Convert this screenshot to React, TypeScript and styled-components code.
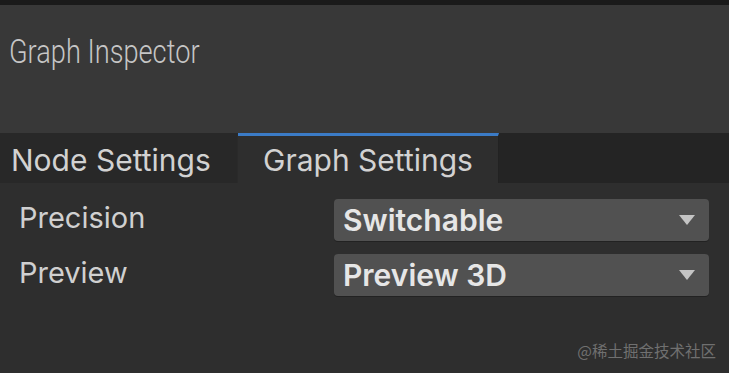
import React from "react";
import styled, { createGlobalStyle } from "styled-components";

const Global = createGlobalStyle`
  html, body {
    margin: 0;
    padding: 0;
    background: #2e2e2e;
  }
  body {
    font-family: Inter, "Noto Sans", sans-serif;
    overflow: hidden;
  }
`;

const Window = styled.div`
  position: relative;
  width: 729px;
  height: 373px;
  display: flex;
  flex-direction: column;
  background: #2e2e2e;
`;

const TopStrip = styled.div`
  height: 5px;
  background: #1a1a1a;
`;

const Header = styled.div`
  height: 128px;
  background: #383838;
  padding: 26px 0 0 9px;
  box-sizing: border-box;
`;

const Title = styled.div`
  font-family: Roboto, Inter, sans-serif;
  font-size: 34px;
  font-weight: 300;
  color: #c6c6c6;
  line-height: 40px;
  transform: scaleX(0.8);
  transform-origin: left center;
  white-space: nowrap;
`;

const TabBar = styled.div`
  height: 50px;
  display: flex;
  background: #242424;
`;

const Tab = styled.div<{ $active?: boolean }>`
  width: ${(p) => (p.$active ? 261 : 238)}px;
  box-sizing: border-box;
  display: flex;
  align-items: center;
  padding-left: ${(p) => (p.$active ? 25 : 11)}px;
  font-size: 30px;
  color: #d2d2d2;
  background: ${(p) => (p.$active ? "#2e2e2e" : "#282828")};
  border-top: 3px solid ${(p) => (p.$active ? "#3b7bc6" : "#282828")};
  border-right: 1px solid ${(p) => (p.$active ? "#222" : "#2a2a2a")};
`;

const Content = styled.div`
  display: flex;
  flex-direction: column;
  gap: 13px;
  padding: 16px 20px 0 19px;
`;

const Row = styled.div`
  display: flex;
  align-items: center;
  justify-content: space-between;
`;

const Label = styled.div`
  font-size: 29px;
  color: #d0d0d0;
  margin-top: -6px;
`;

const Dropdown = styled.div`
  width: 375px;
  height: 42px;
  box-sizing: border-box;
  border-radius: 4px;
  background: #515151;
  box-shadow: 0 1px 0 #222;
  display: flex;
  align-items: center;
  justify-content: space-between;
  padding: 0 14px 0 9px;
`;

const Value = styled.span`
  font-size: 30px;
  font-weight: 600;
  color: #e6e6e6;
`;

const Arrow = styled.span`
  width: 0;
  height: 0;
  border-left: 8.5px solid transparent;
  border-right: 8.5px solid transparent;
  border-top: 10px solid #c4c4c4;
`;

const Watermark = styled.div`
  position: absolute;
  right: 13px;
  bottom: 12px;
  font-family: "Noto Sans CJK SC", sans-serif;
  font-size: 15.5px;
  color: #707070;
`;

const settings = [
  { label: "Precision", value: "Switchable" },
  { label: "Preview", value: "Preview 3D" },
];

export default function App() {
  return (
    <Window>
      <Global />
      <TopStrip />
      <Header>
        <Title>Graph Inspector</Title>
      </Header>
      <TabBar>
        <Tab>Node Settings</Tab>
        <Tab $active>Graph Settings</Tab>
      </TabBar>
      <Content>
        {settings.map((s) => (
          <Row key={s.label}>
            <Label>{s.label}</Label>
            <Dropdown>
              <Value>{s.value}</Value>
              <Arrow />
            </Dropdown>
          </Row>
        ))}
      </Content>
      <Watermark>@稀土掘金技术社区</Watermark>
    </Window>
  );
}
